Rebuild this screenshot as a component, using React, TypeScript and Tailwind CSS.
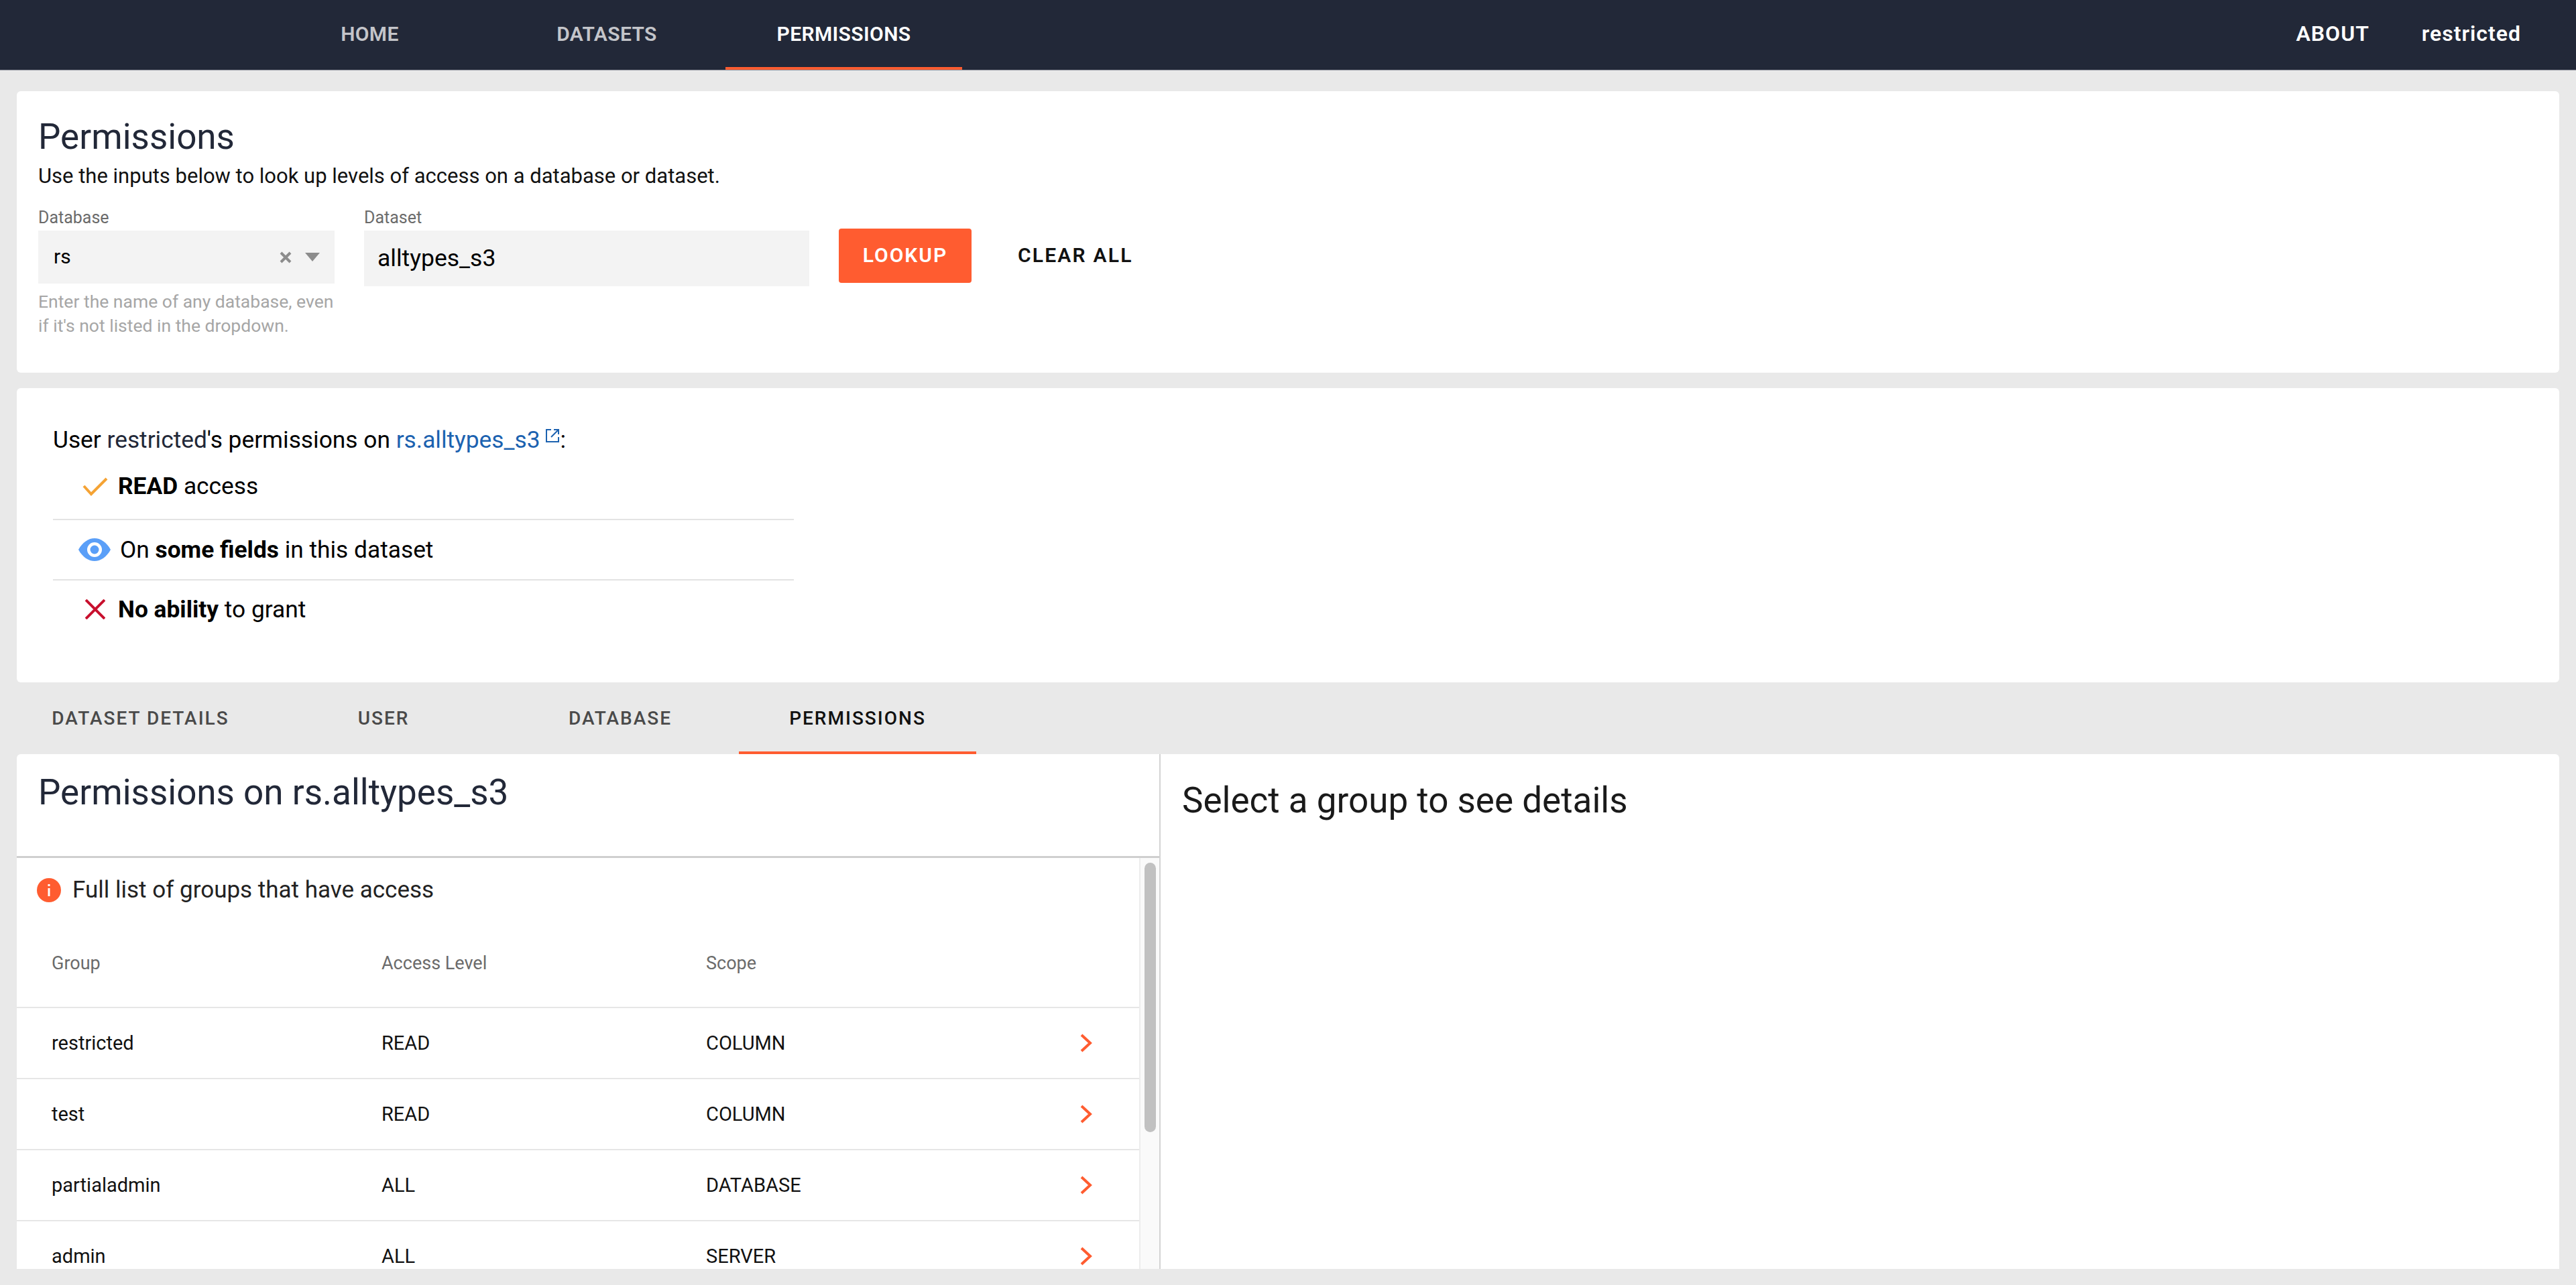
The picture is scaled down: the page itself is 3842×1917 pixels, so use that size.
const rows = [
  { group: "restricted", access: "READ", scope: "COLUMN" },
  { group: "test", access: "READ", scope: "COLUMN" },
  { group: "partialadmin", access: "ALL", scope: "DATABASE" },
  { group: "admin", access: "ALL", scope: "SERVER" },
];

const Chevron = () => (
  <svg width="18" height="28" viewBox="0 0 18 28" fill="none" stroke="#ff5c30" strokeWidth="4" className="-mt-[2px]">
    <path d="M2 2 L15 14 L2 26" />
  </svg>
);

const App = () => {
  return (
    <div className="h-[1917px] w-full overflow-hidden bg-[#e9e9e9] font-['Roboto',sans-serif] text-black">
      <div className="h-[105px] bg-[#222838] flex items-stretch pl-[375px] pr-[82px] border-b border-[#8a8d98]">
        <div className="w-[353px] flex items-center justify-center pb-[4px] text-[30px] font-semibold tracking-[0.4px] text-[#c4c5ca]">HOME</div>
        <div className="w-[354px] flex items-center justify-center pb-[4px] text-[30px] font-semibold tracking-[0.4px] text-[#c4c5ca]">DATASETS</div>
        <div className="w-[353px] flex items-center justify-center text-[30px] font-semibold tracking-[0.4px] text-white border-b-4 border-[#ff5c30]">PERMISSIONS</div>
        <div className="flex-1" />
        <div className="flex items-center pb-[4px] gap-[78px] text-[32px] font-semibold tracking-[1px] text-white">
          <span>ABOUT</span>
          <span>restricted</span>
        </div>
      </div>

      <div className="mx-[25px] mt-[31px] h-[420px] bg-white rounded-[6px] px-[32px] pt-[38px]">
        <h1 className="text-[53px] leading-[60px] text-[#222838]">Permissions</h1>
        <p className="text-[31px] leading-[36px] mt-[11px] text-[#111]">Use the inputs below to look up levels of access on a database or dataset.</p>
        <div className="flex mt-[29px]">
          <div className="w-[442px]">
            <div className="text-[25px] leading-[30px] text-[#6b6b6b]">Database</div>
            <div className="mt-[4px] h-[79px] bg-[#f3f3f3] flex items-center pl-[23px] pr-[22px]">
              <span className="text-[30px] flex-1 pb-[2px]">rs</span>
              <svg width="20" height="20" viewBox="0 0 20 20" stroke="#8c8c8c" strokeWidth="4" className="mr-[19px]">
                <path d="M3 3 L17 17 M17 3 L3 17" />
              </svg>
              <svg width="22" height="13" viewBox="0 0 22 13" fill="#8c8c8c">
                <path d="M0 0 H22 L11 13 Z" />
              </svg>
            </div>
            <div className="mt-[9px] text-[26.5px] leading-[36px] text-[#a6a6a6] whitespace-nowrap">
              Enter the name of any database, even
              <br />
              if it's not listed in the dropdown.
            </div>
          </div>
          <div className="w-[664px] ml-[44px]">
            <div className="text-[25px] leading-[30px] text-[#6b6b6b]">Dataset</div>
            <div className="mt-[4px] h-[83px] bg-[#f3f3f3] flex items-center pl-[20px] text-[35.5px]">alltypes_s3</div>
          </div>
          <div className="ml-[44px] mt-[31px] w-[198px] h-[81px] bg-[#ff5c30] rounded-[4px] text-white flex items-center justify-center text-[30px] font-semibold tracking-[2px] pb-[2px]">LOOKUP</div>
          <div className="ml-[69px] mt-[31px] h-[81px] flex items-center text-[30px] font-semibold tracking-[2.2px] text-[#111] pb-[2px]">CLEAR ALL</div>
        </div>
      </div>

      <div className="mx-[25px] mt-[23px] h-[439px] bg-white rounded-[6px] pl-[54px] pt-[55px]">
        <div className="text-[35.3px] leading-[44px] flex items-baseline">
          <span>User <span className="text-[#222838]">restricted</span>'s permissions on&nbsp;</span>
          <span className="text-[#1c62b0]">rs.alltypes_s3</span>
          <svg width="24" height="24" viewBox="0 0 24 24" fill="none" stroke="#1c62b0" strokeWidth="2" className="ml-[6px] self-start mt-[4px]">
            <path d="M10 3 H3 V21 H21 V14 M14 3 H21 V10 M21 3 L10 14" />
          </svg>
          <span>:</span>
        </div>
        <div className="w-[1105px] mt-[11px] text-[35.3px]">
          <div className="h-[87px] border-b-2 border-[#e3e3e3] flex items-center pb-[12px] pl-[44px] gap-[15px]">
            <svg width="38" height="28" viewBox="0 0 38 28" fill="none" stroke="#f5a334" strokeWidth="4" className="shrink-0">
              <path d="M2 13 L13 25 L36 2" />
            </svg>
            <span><b className="font-bold">READ</b> access</span>
          </div>
          <div className="h-[90px] border-b-2 border-[#e3e3e3] flex items-center pl-[38px] gap-[14px]">
            <svg width="48" height="34" viewBox="0 0 48 34" className="shrink-0">
              <path d="M0 17 C6 6 15 0 24 0 C33 0 42 6 48 17 C42 28 33 34 24 34 C15 34 6 28 0 17 Z" fill="#5a9ff8" />
              <circle cx="24" cy="17" r="11" fill="white" />
              <circle cx="24" cy="17" r="6.5" fill="#5a9ff8" />
            </svg>
            <span>On <b className="font-bold">some fields</b> in this dataset</span>
          </div>
          <div className="h-[86px] flex items-center pl-[48px] gap-[19px]">
            <svg width="30" height="30" viewBox="0 0 30 30" stroke="#c8102e" strokeWidth="4" className="shrink-0">
              <path d="M1 1 L29 29 M29 1 L1 29" />
            </svg>
            <span><b className="font-bold">No ability</b> to grant</span>
          </div>
        </div>
      </div>

      <div className="h-[107px] mx-[25px] flex items-stretch text-[28px] font-medium tracking-[2px] text-[#4a4a4a]">
        <div className="w-[369px] flex items-center justify-center">DATASET DETAILS</div>
        <div className="w-[354px] flex items-center justify-center pl-[2px]">USER</div>
        <div className="w-[354px] flex items-center justify-center">DATABASE</div>
        <div className="w-[354px] flex items-center justify-center text-[#111] border-b-4 border-[#ff5c30] pt-[4px]">PERMISSIONS</div>
      </div>

      <div className="mx-[25px] h-[768px] bg-white rounded-t-[6px] flex overflow-hidden">
        <div className="w-[1706px] shrink-0 border-r-2 border-[#d4d4d4] flex flex-col">
          <div className="h-[155px] shrink-0 border-b-[3px] border-[#cfcfcf] pl-[32px] pt-[25px]">
            <h2 className="text-[53px] leading-[64px] text-[#222838]">Permissions on rs.alltypes_s3</h2>
          </div>
          <div className="flex-1 flex min-h-0">
            <div className="flex-1 min-w-0">
              <div className="h-[96px] flex items-center pl-[30px] gap-[17px] text-[35px] text-[#222]">
                <svg width="36" height="36" viewBox="0 0 36 36" className="shrink-0">
                  <circle cx="18" cy="18" r="18" fill="#ff5c30" />
                  <rect x="16.5" y="15" width="3" height="12" fill="white" />
                  <rect x="16.5" y="9" width="3" height="3" fill="white" />
                </svg>
                Full list of groups that have access
              </div>
              <div className="h-[128px] border-b-2 border-[#e6e6e6] grid grid-cols-[492px_484px_1fr] items-center pl-[52px] text-[27px] text-[#6b6b6b] pb-[3px]">
                <span>Group</span>
                <span>Access Level</span>
                <span>Scope</span>
              </div>
              {rows.map((row) => (
                <div key={row.group} className="h-[106px] border-b-2 border-[#e6e6e6] grid grid-cols-[492px_484px_1fr_auto] items-center pl-[52px] pr-[70px] text-[29px] text-[#111] pt-[2px]">
                  <span>{row.group}</span>
                  <span>{row.access}</span>
                  <span>{row.scope}</span>
                  <Chevron />
                </div>
              ))}
            </div>
            <div className="w-[30px] shrink-0 bg-[#fafafa] border-l-2 border-[#ededed] pl-[6px] pt-[7px]">
              <div className="w-[17px] h-[402px] rounded-full bg-[#c1c1c1]" />
            </div>
          </div>
        </div>
        <div className="flex-1 pl-[32px] pt-[37px]">
          <h2 className="text-[53px] leading-[64px] text-[#1a1a1a]">Select a group to see details</h2>
        </div>
      </div>
    </div>
  );
};

export default App;
